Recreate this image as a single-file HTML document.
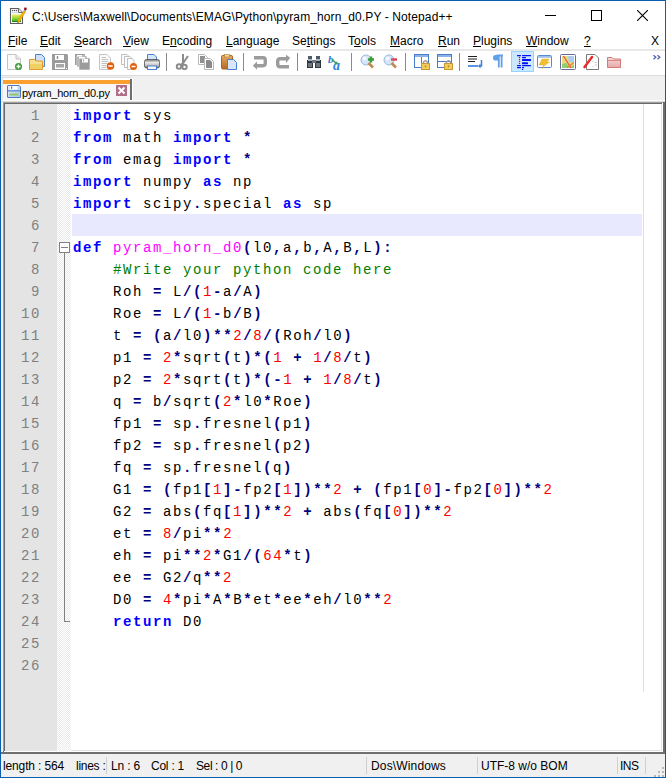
<!DOCTYPE html>
<html><head><meta charset="utf-8">
<style>
*{margin:0;padding:0;box-sizing:border-box}
html,body{width:666px;height:778px;overflow:hidden;background:#f0f0f0;font-family:"Liberation Sans",sans-serif;font-size:12px;color:#000}
.abs{position:absolute}
#win{position:absolute;left:0;top:0;width:666px;height:778px;border:1px solid #0a5fb0;background:#f0f0f0}
#title{position:absolute;left:1px;top:1px;width:664px;height:30px;background:#fff}
#menu{position:absolute;left:1px;top:31px;width:664px;height:18px;background:#fff}
.mi{position:absolute;top:3px;white-space:nowrap}
.u{text-decoration:underline}
#tb{position:absolute;left:1px;top:49px;width:664px;height:27px;background:#fff;border-top:2px solid #e8e8e8;border-bottom:1px solid #dcdcdc}
#tabbar{position:absolute;left:1px;top:76px;width:664px;height:26px;background:#f0f0f0}
#editor{position:absolute;left:3px;top:102px;width:662px;height:652px}
#status{position:absolute;left:1px;top:752px;width:664px;height:25px;background:#f0f0f0;border-top:2px solid #707070}
.code{position:absolute;left:73px;white-space:pre;font-family:"Liberation Mono",monospace;font-size:14px;letter-spacing:1.6px;line-height:22px}
.ln{position:absolute;width:40px;text-align:right;white-space:pre;font-family:"Liberation Mono",monospace;font-size:14px;letter-spacing:1.6px;line-height:22px;color:#808080}
.k{color:#0000ff;font-weight:bold}
.o{color:#000080;font-weight:bold}
.n{color:#ff0000}
.d{color:#ff00ff}
.c{color:#008000}
.st{position:absolute;top:5px;white-space:nowrap}
</style></head><body>
<div id="win"></div>
<div id="title">
 <svg class="abs" style="left:7px;top:5px" width="20" height="20" viewBox="0 0 20 20">
  <path d="M2.5 2.5 H10.5 L14.5 6.5 V17.5 H2.5 Z" fill="#fff" stroke="#5c5c5c" stroke-width="1.1"/>
  <path d="M10.5 2.5 V6.5 H14.5" fill="#e8e8e8" stroke="#5c5c5c" stroke-width="0.9"/>
  <circle cx="4.6" cy="4.5" r="0.8" fill="#555"/><circle cx="6.6" cy="4.5" r="0.8" fill="#555"/><circle cx="8.6" cy="4.5" r="0.8" fill="#555"/>
  <rect x="4" y="6.2" width="6" height="0.8" fill="#b8cde0"/>
  <defs><linearGradient id="gg" x1="0" y1="0" x2="0" y2="1"><stop offset="0" stop-color="#eef4d8"/><stop offset="0.2" stop-color="#dde650"/><stop offset="0.5" stop-color="#9ad838"/><stop offset="0.8" stop-color="#50c030"/><stop offset="1" stop-color="#0a7010"/></linearGradient></defs>
  <rect x="4" y="8" width="9" height="8" fill="url(#gg)"/>
  <path d="M9.3 15.2 L15.8 4.6 L17.6 5.8 L11.1 16.4 Z" fill="#f2b400" stroke="#d08a00" stroke-width="0.5"/>
  <path d="M9.3 15.2 L11.1 16.4 L9.3 17 Z" fill="#8a6030"/>
  <path d="M15.8 4.6 L16.6 3.3 L18.4 4.5 L17.6 5.8 Z" fill="#7aa0d0"/>
  <rect x="16.2" y="1.6" width="2.4" height="2.4" fill="#a00010"/>
 </svg>
 <div class="abs" style="left:31px;top:9px;font-size:12px;letter-spacing:0.11px;white-space:nowrap">C:\Users\Maxwell\Documents\EMAG\Python\pyram_horn_d0.PY - Notepad++</div>
 <div class="abs" style="left:544px;top:14px;width:11px;height:1px;background:#000"></div>
 <div class="abs" style="left:590px;top:9px;width:11px;height:11px;border:1px solid #000"></div>
 <svg class="abs" style="left:636px;top:9px" width="11" height="11" viewBox="0 0 11 11"><path d="M0 0 L11 11 M11 0 L0 11" stroke="#000" stroke-width="1.1"/></svg>
</div>
<div id="menu">
<span class="mi" style="left:7px"><span class="u">F</span>ile</span>
<span class="mi" style="left:39px"><span class="u">E</span>dit</span>
<span class="mi" style="left:73px"><span class="u">S</span>earch</span>
<span class="mi" style="left:122px"><span class="u">V</span>iew</span>
<span class="mi" style="left:161px">E<span class="u">n</span>coding</span>
<span class="mi" style="left:225px"><span class="u">L</span>anguage</span>
<span class="mi" style="left:291px">Se<span class="u">t</span>tings</span>
<span class="mi" style="left:347px">T<span class="u">o</span>ols</span>
<span class="mi" style="left:389px"><span class="u">M</span>acro</span>
<span class="mi" style="left:437px"><span class="u">R</span>un</span>
<span class="mi" style="left:472px"><span class="u">P</span>lugins</span>
<span class="mi" style="left:525px"><span class="u">W</span>indow</span>
<span class="mi" style="left:583px"><span class="u">?</span></span>
<span class="mi" style="left:650px">X</span>
</div>
<div id="tb"></div>
<svg class="abs" style="left:7px;top:54px" width="16" height="16" viewBox="0 0 16 16"><path d="M0.5 0.5 H9 L13.5 5 V15.5 H0.5 Z" fill="#fafafa" stroke="#c4c4c4"/><path d="M9 0.5 V5 H13.5" fill="#e8e8e8" stroke="#c4c4c4"/><circle cx="11.5" cy="12.5" r="3.5" fill="#3a9a30"/><path d="M9.5 12.5 H13.5 M11.5 10.5 V14.5" stroke="#fff" stroke-width="1.4"/></svg>
<svg class="abs" style="left:29px;top:54px" width="16" height="16" viewBox="0 0 16 16"><path d="M6.5 0.5 H12.5 L15.5 3.5 V12.5 H6.5 Z" fill="#cfe0f8" stroke="#4a80d0"/><path d="M0.5 5.5 H6 L7 7 H13.5 V15.5 H0.5 Z" fill="#f8e090" stroke="#e09a30"/><rect x="1" y="10" width="12" height="5" fill="#f0d060"/></svg>
<svg class="abs" style="left:52px;top:54px" width="16" height="16" viewBox="0 0 16 16"><path d="M0 0 H15 L16 1 V16 H0 Z" fill="#9c9c9c"/><rect x="3" y="1" width="9" height="5" fill="#fff"/><rect x="4.8" y="2" width="1.4" height="3" fill="#8a8a8a"/><rect x="3" y="9" width="10" height="6" fill="#fff"/><rect x="4" y="10" width="8" height="3.5" fill="#a8a8a8"/><rect x="14" y="14" width="1" height="1" fill="#fff"/></svg>
<svg class="abs" style="left:75px;top:54px" width="16" height="16" viewBox="0 0 16 16"><rect x="0" y="0" width="10" height="11" fill="#9c9c9c"/><rect x="2" y="2" width="10" height="11" fill="#9c9c9c" stroke="#fff" stroke-width="0.6"/><rect x="4" y="4" width="11" height="12" fill="#9c9c9c" stroke="#fff" stroke-width="0.6"/><rect x="2" y="1" width="5" height="1.5" fill="#fff"/><rect x="4" y="3" width="6" height="1.5" fill="#fff"/><rect x="7" y="5" width="6" height="3.5" fill="#fff"/><rect x="8" y="5.5" width="1" height="2" fill="#9c9c9c"/></svg>
<svg class="abs" style="left:99px;top:54px" width="16" height="16" viewBox="0 0 16 16"><path d="M0.5 0.5 H8 L11.5 4 V15.5 H0.5 Z" fill="#fafafa" stroke="#c4c4c4"/><path d="M2.5 3.5 H7 M2.5 5.5 H9 M2.5 7.5 H9 M2.5 9.5 H8 M2.5 11.5 H7 M2.5 13.5 H7" stroke="#b4b4b4" stroke-width="0.8"/><circle cx="11.5" cy="12" r="3.8" fill="#e0600c"/><path d="M9.3 12 H13.7" stroke="#fff" stroke-width="1.5"/></svg>
<svg class="abs" style="left:121px;top:54px" width="16" height="16" viewBox="0 0 16 16"><path d="M0.5 0.5 H6 L8 2.5 V10.5 H0.5 Z" fill="#fafafa" stroke="#c0c0c0"/><path d="M3.5 2.5 H9 L11 4.5 V13.5 H3.5 Z" fill="#fafafa" stroke="#c0c0c0"/><path d="M6.5 4.5 H11 L13 6.5 V15.5 H6.5 Z" fill="#fafafa" stroke="#c0c0c0"/><circle cx="12.5" cy="12.5" r="3.5" fill="#e06010"/><path d="M10.5 12.5 H14.5" stroke="#fff" stroke-width="1.4"/></svg>
<svg class="abs" style="left:144px;top:54px" width="17" height="16" viewBox="0 0 17 16"><defs><linearGradient id="prg" x1="0" y1="0" x2="0" y2="1"><stop offset="0" stop-color="#707070"/><stop offset="0.35" stop-color="#e8e8e8"/><stop offset="0.7" stop-color="#c0c0c0"/><stop offset="1" stop-color="#5a5a5a"/></linearGradient></defs><path d="M3.5 0.5 H10 L12.5 3 V7 H3.5 Z" fill="#d4e4fa" stroke="#4a80d0"/><rect x="0.5" y="5.5" width="15" height="8.5" rx="2" fill="url(#prg)" stroke="#505050" stroke-width="0.8"/><rect x="3.5" y="12" width="9" height="3.5" fill="#f4f8ff" stroke="#4a80d0"/></svg>
<div class="abs" style="left:166px;top:53px;width:1px;height:18px;background:#8a8a8a"></div>
<svg class="abs" style="left:175px;top:54px" width="16" height="16" viewBox="0 0 16 16"><path d="M8 0 V9 M13 2 L7.5 10" stroke="#8c8c8c" stroke-width="2"/><circle cx="4" cy="12.5" r="2.2" fill="none" stroke="#8c8c8c" stroke-width="2"/><circle cx="9.5" cy="13" r="2.2" fill="none" stroke="#8c8c8c" stroke-width="2"/><path d="M6 11 L8 9" stroke="#8c8c8c" stroke-width="2"/></svg>
<svg class="abs" style="left:198px;top:54px" width="16" height="16" viewBox="0 0 16 16"><path d="M0.5 0.5 H6.5 L9.5 3.5 V10.5 H0.5 Z" fill="#fff" stroke="#b8b8b8"/><rect x="2" y="2" width="5" height="7" fill="#909090"/><path d="M6.5 4.5 H12.5 L15.5 7.5 V15.5 H6.5 Z" fill="#fff" stroke="#b8b8b8"/><path d="M8 6 H12 L14 8 V14 H8 Z" fill="#8a8a8a"/></svg>
<svg class="abs" style="left:221px;top:54px" width="16" height="16" viewBox="0 0 16 16"><defs><linearGradient id="pg" x1="0" y1="0" x2="0" y2="1"><stop offset="0" stop-color="#e8a860"/><stop offset="1" stop-color="#b06a28"/></linearGradient></defs><rect x="0.5" y="1.5" width="11" height="13.5" rx="1.2" fill="url(#pg)" stroke="#a86428"/><rect x="3.5" y="0.5" width="5" height="2.5" fill="#f0d890" stroke="#b08040" stroke-width="0.6"/><path d="M6.5 5.5 H12.5 L15.5 8.5 V15.5 H6.5 Z" fill="#d8e6fc" stroke="#4a80d0"/></svg>
<div class="abs" style="left:243px;top:53px;width:1px;height:18px;background:#8a8a8a"></div>
<svg class="abs" style="left:252px;top:54px" width="16" height="16" viewBox="0 0 16 16"><path d="M2 3.8 H11 Q13.3 3.8 13.3 6.5 V9 Q13.3 11.7 11 11.7 H4" fill="none" stroke="#9c9c9c" stroke-width="3.4"/><path d="M0.8 11.7 L5 7.6 V15.7 Z" fill="#9c9c9c"/></svg>
<svg class="abs" style="left:275px;top:54px" width="16" height="16" viewBox="0 0 16 16"><path d="M14 12.8 H5 Q2.7 12.8 2.7 10 V7.5 Q2.7 4.8 5 4.8 H12" fill="none" stroke="#9c9c9c" stroke-width="3.4"/><path d="M15.2 3.8 L11 0.8 V9.2 Z" fill="#9c9c9c"/></svg>
<div class="abs" style="left:297px;top:53px;width:1px;height:18px;background:#8a8a8a"></div>
<svg class="abs" style="left:306px;top:54px" width="16" height="16" viewBox="0 0 16 16"><rect x="1" y="6" width="6" height="8" fill="#2c343c"/><rect x="9" y="6" width="6" height="8" fill="#2c343c"/><rect x="2" y="2" width="4" height="4" fill="#505a66"/><rect x="10" y="2" width="4" height="4" fill="#505a66"/><rect x="6" y="6" width="4" height="3" fill="#6a7888"/><rect x="2" y="5" width="4" height="2" fill="#a8b4c0"/><rect x="10" y="5" width="4" height="2" fill="#a8b4c0"/><rect x="2.5" y="9" width="1" height="4" fill="#b0b8c0"/><rect x="4.5" y="9" width="1" height="4" fill="#b0b8c0"/><rect x="10.5" y="9" width="1" height="4" fill="#b0b8c0"/><rect x="12.5" y="9" width="1" height="4" fill="#b0b8c0"/></svg>
<svg class="abs" style="left:327px;top:54px" width="18" height="16" viewBox="0 0 18 16"><text x="1" y="9" font-family="Liberation Serif" font-style="italic" font-weight="bold" font-size="11" fill="#2f78e0">b</text><text x="6" y="15.5" font-family="Liberation Serif" font-style="italic" font-weight="bold" font-size="14" fill="#2f80e8">a</text><path d="M5 5.5 L9.5 9.5" stroke="#40a050" stroke-width="1.6"/><path d="M10.5 10.5 L7 10.3 L10.3 7 Z" fill="#40a050"/></svg>
<div class="abs" style="left:351px;top:53px;width:1px;height:18px;background:#8a8a8a"></div>
<svg class="abs" style="left:360px;top:54px" width="16" height="16" viewBox="0 0 16 16"><circle cx="6" cy="6" r="5" fill="#d4e6fa" stroke="#9ab8dc"/><circle cx="4.5" cy="4.5" r="2" fill="#f4f8ff"/><path d="M8.5 9 L13 13.5" stroke="#c08a50" stroke-width="2.6"/><path d="M8 5.5 H14 M11 2.5 V8.5" stroke="#3a9a3a" stroke-width="2.4"/></svg>
<svg class="abs" style="left:383px;top:54px" width="16" height="16" viewBox="0 0 16 16"><circle cx="6" cy="6" r="5" fill="#d4e6fa" stroke="#9ab8dc"/><circle cx="4.5" cy="4.5" r="2" fill="#f4f8ff"/><path d="M8.5 9 L13 13.5" stroke="#c08a50" stroke-width="2.6"/><path d="M8 5.5 H14" stroke="#e04050" stroke-width="2.4"/></svg>
<div class="abs" style="left:405px;top:53px;width:1px;height:18px;background:#8a8a8a"></div>
<svg class="abs" style="left:414px;top:54px" width="16" height="16" viewBox="0 0 16 16"><rect x="0.5" y="0.5" width="14" height="13" fill="#fff" stroke="#4a7ccc"/><rect x="1" y="1" width="13" height="2" fill="#8ab4e8"/><path d="M7.5 3 V13" stroke="#4a7ccc"/><rect x="7.5" y="9.5" width="8" height="6" fill="#f2cc58" stroke="#c89a30"/><path d="M9.5 9.5 V8 Q11.5 5.5 13.5 8 V9.5" fill="none" stroke="#9a9a9a" stroke-width="1.4"/><rect x="10.8" y="11.5" width="1.4" height="1.6" fill="#b08020"/></svg>
<svg class="abs" style="left:437px;top:54px" width="16" height="16" viewBox="0 0 16 16"><rect x="0.5" y="0.5" width="14" height="13" fill="#fff" stroke="#4a7ccc"/><rect x="1" y="1" width="13" height="2" fill="#8ab4e8"/><path d="M1 7.5 H14" stroke="#4a7ccc"/><rect x="7.5" y="9.5" width="8" height="6" fill="#f2cc58" stroke="#c89a30"/><path d="M9.5 9.5 V8 Q11.5 5.5 13.5 8 V9.5" fill="none" stroke="#9a9a9a" stroke-width="1.4"/><rect x="10.8" y="11.5" width="1.4" height="1.6" fill="#b08020"/></svg>
<div class="abs" style="left:459px;top:53px;width:1px;height:18px;background:#8a8a8a"></div>
<svg class="abs" style="left:467px;top:54px" width="16" height="16" viewBox="0 0 16 16"><path d="M1 2.5 H10 M1 5 H10 M1 7.5 H8" stroke="#202020" stroke-width="1"/><path d="M1 12 H11" stroke="#5a98e0" stroke-width="2"/><path d="M14.5 6 V12 H12" fill="none" stroke="#3a80d8" stroke-width="1.5"/><path d="M11 12 L13.5 9.5 V14.5 Z" fill="#3a80d8"/></svg>
<svg class="abs" style="left:492px;top:54px" width="16" height="16" viewBox="0 0 16 16"><path d="M4.5 1.5 H11 M6.8 2 V13.5 M9.6 2 V13.5" stroke="#62a0e8" stroke-width="1.8"/><path d="M6.8 1 H3.5 Q1 1 1 3.8 Q1 6.6 3.5 6.6 H6.8 Z" fill="#62a0e8"/></svg>
<div class="abs" style="left:511px;top:51px;width:23px;height:21px;background:#cce8ff;border:1px solid #99d1ff"></div>
<svg class="abs" style="left:516px;top:54px" width="16" height="16" viewBox="0 0 16 16"><rect x="1" y="1" width="4" height="1.2" rx="0.5" fill="#0010f0"/><rect x="6" y="1" width="9" height="1.2" rx="0.5" fill="#0010f0"/><rect x="6" y="3" width="4" height="1.2" rx="0.5" fill="#0010f0"/><rect x="6" y="5" width="9" height="2" rx="0.5" fill="#0010f0"/><rect x="6" y="8.3" width="6" height="2" rx="0.5" fill="#0010f0"/><rect x="1" y="11" width="4" height="1.2" rx="0.5" fill="#0010f0"/><rect x="6" y="11" width="9" height="1.2" rx="0.5" fill="#0010f0"/><rect x="1" y="13" width="4" height="1.2" rx="0.5" fill="#0010f0"/><rect x="6" y="13" width="2" height="1.2" rx="0.5" fill="#0010f0"/><circle cx="6.5" cy="15.4" r="0.7" fill="#0010f0"/><circle cx="3.5" cy="3.5" r="0.75" fill="#f01010"/><circle cx="3.5" cy="5.5" r="0.75" fill="#f01010"/><circle cx="3.5" cy="7.5" r="0.75" fill="#f01010"/><circle cx="3.5" cy="9.5" r="0.75" fill="#f01010"/></svg>
<svg class="abs" style="left:537px;top:54px" width="16" height="16" viewBox="0 0 16 16"><rect x="0.5" y="1.5" width="14" height="12" rx="1" fill="#fff" stroke="#5a8ad4"/><rect x="1" y="2" width="13" height="1.8" fill="#9ec0ec"/><path d="M5 5 H12 L10 8 L12.5 8 L7 12 L5.5 15 L6.5 11 L2 11 Z" fill="#f0c030" stroke="#e0a820" stroke-width="0.4"/></svg>
<svg class="abs" style="left:560px;top:54px" width="16" height="16" viewBox="0 0 16 16"><rect x="0.5" y="0.5" width="15" height="15" rx="1" fill="#fff" stroke="#6a6a98"/><rect x="2" y="2" width="12" height="12" fill="#e4dc80"/><path d="M8 2 H14 V9 L9 8 Z" fill="#a8cdf0"/><path d="M2 10 L6 9 L10 14 H2 Z" fill="#8cd070"/><path d="M10 14 L14 10 V14 Z" fill="#90d070"/><path d="M3.5 2 L11 14" stroke="#f05040" stroke-width="1.3"/><path d="M7 13.5 L14 8.5" stroke="#f08030" stroke-width="1.2"/></svg>
<svg class="abs" style="left:583px;top:54px" width="16" height="16" viewBox="0 0 16 16"><path d="M3.5 0.5 H12 L15.5 4 V15.5 H3.5 Z" fill="#fff" stroke="#7a7a7a"/><path d="M13 8 V13" stroke="#909090" stroke-dasharray="1 1.5"/><circle cx="10" cy="7.5" r="0.5" fill="#90c090"/><circle cx="10" cy="12.5" r="0.5" fill="#90c090"/><path d="M1.5 13 L9 3" stroke="#f02020" stroke-width="2.4" stroke-linecap="round"/><path d="M2 11.5 L8 4" stroke="#ff9090" stroke-width="0.6" stroke-dasharray="1 1"/></svg>
<svg class="abs" style="left:606px;top:54px" width="16" height="16" viewBox="0 0 16 16"><defs><linearGradient id="fg" x1="0" y1="0" x2="0" y2="1"><stop offset="0" stop-color="#f8dada"/><stop offset="1" stop-color="#e8a8a8"/></linearGradient></defs><path d="M1.5 3.5 H6 L7.5 5 H14.5 V13.5 H1.5 Z" fill="url(#fg)" stroke="#d07a7a"/><path d="M2 6.5 H14" stroke="#d88888"/></svg>
<svg class="abs" style="left:652px;top:54px" width="10" height="7" viewBox="0 0 10 7"><path d="M1.5 1.2 L3.8 3.2 L1.5 5.2 M5.5 1.2 L7.8 3.2 L5.5 5.2" fill="none" stroke="#5060b0" stroke-width="1.3"/></svg>

<div id="tabbar"></div>
<div class="abs" style="left:2px;top:77px;width:129px;height:1px;background:#dcdcdc"></div>
<div class="abs" style="left:2px;top:78px;width:1px;height:24px;background:#e3e3e3"></div>
<div class="abs" style="left:3px;top:78px;width:128px;height:23px;background:#f6f6f6;border-top:2px solid #fff"></div>
<div class="abs" style="left:3px;top:80px;width:127px;height:4px;background:#f9a030"></div>
<div class="abs" style="left:130px;top:79px;width:2px;height:21px;background:#6e6e6e"></div>
<div class="abs" style="left:132px;top:79px;width:1px;height:21px;background:#fff"></div>
<svg class="abs" style="left:7px;top:85px" width="14" height="13" viewBox="0 0 14 13">
 <defs><linearGradient id="sg" x1="0" y1="0" x2="1" y2="1"><stop offset="0" stop-color="#e4eefc"/><stop offset="1" stop-color="#a8c4ec"/></linearGradient></defs>
 <path d="M1 0.5 H12 L13.5 2 V12 Q13.5 12.5 13 12.5 H1 Q0.5 12.5 0.5 12 V1 Q0.5 0.5 1 0.5 Z" fill="url(#sg)" stroke="#4a78c4"/>
 <rect x="3" y="1" width="7.5" height="3.5" fill="#fff"/><rect x="4" y="1.5" width="1.2" height="2.2" fill="#3a68b4"/>
 <rect x="1" y="5.2" width="12" height="1.3" fill="#5a88d0"/>
 <rect x="2.5" y="8.5" width="9" height="2" fill="#94c864"/>
</svg>
<div class="abs" style="left:22px;top:87px;font-size:11px;letter-spacing:-0.25px;white-space:nowrap">pyram_horn_d0.py</div>
<svg class="abs" style="left:116px;top:85px" width="11" height="11" viewBox="0 0 11 11">
 <rect x="0" y="0" width="11" height="11" fill="#b0708a"/>
 <path d="M2.5 2.5 L8.5 8.5 M8.5 2.5 L2.5 8.5" stroke="#fff" stroke-width="2"/>
</svg>
<div class="abs" style="left:1px;top:100px;width:664px;height:1px;background:#fff"></div>
<div class="abs" style="left:1px;top:101px;width:664px;height:1px;background:#dcdcdc"></div>
<div id="editor">
 <div class="abs" style="left:0;top:0;width:662px;height:650px;background:#6e6e6e"></div>
 <div class="abs" style="left:0;top:0;width:660px;height:1px;background:#a0a0a0"></div>
 <div class="abs" style="left:0;top:0;width:1px;height:649px;background:#a0a0a0"></div>
 <div class="abs" style="left:1px;top:1px;width:659px;height:649px;background:#fff"></div>
 <div class="abs" style="left:1px;top:1px;width:658px;height:1px;background:#696969"></div>
 <div class="abs" style="left:1px;top:1px;width:1px;height:648px;background:#696969"></div>
 <div class="abs" style="left:2px;top:2px;width:657px;height:647px;background:#e3e3e3"></div>
 <div class="abs" style="left:2px;top:2px;width:656px;height:646px;background:#fff"></div>
 <div id="lnm" class="abs" style="left:2px;top:2px;width:52px;height:647px;background:#e4e4e4"></div>
 <div id="fold" class="abs" style="left:54px;top:2px;width:14px;height:647px;background:repeating-conic-gradient(#ffffff 0% 25%, #ebebeb 0% 50%) 0 0/2px 2px"></div>
 <div class="abs" style="left:69px;top:112px;width:570px;height:22px;background:#e8e8ff"></div>
 <div class="abs" style="left:640px;top:2px;width:1px;height:588px;background:#dedede"></div>
 <div class="abs" style="left:56px;top:140px;width:11px;height:11px;border:1px solid #808080;background:#fff"></div>
 <div class="abs" style="left:58px;top:145px;width:7px;height:1px;background:#808080"></div>
 <div class="abs" style="left:61px;top:151px;width:1px;height:369px;background:#808080"></div>
 <div class="abs" style="left:61px;top:519px;width:6px;height:1px;background:#808080"></div>
 <div class="ln" style="left:-2px;top:3px">1
2
3
4
5
6
7
8
9
10
11
12
13
14
15
16
17
18
19
20
21
22
23
24
25
26</div>
 <div class="code" style="left:70px;top:3px"><span class="k">import</span> sys
<span class="k">from</span> math <span class="k">import</span> <span class="o">*</span>
<span class="k">from</span> emag <span class="k">import</span> <span class="o">*</span>
<span class="k">import</span> numpy <span class="k">as</span> np
<span class="k">import</span> scipy<span class="o">.</span>special <span class="k">as</span> sp

<span class="k">def</span> <span class="d">pyram_horn_d0</span><span class="o">(</span>l0<span class="o">,</span>a<span class="o">,</span>b<span class="o">,</span>A<span class="o">,</span>B<span class="o">,</span>L<span class="o">)</span><span class="o">:</span>
    <span class="c">#Write your python code here</span>
    Roh <span class="o">=</span> L<span class="o">/</span><span class="o">(</span><span class="n">1</span><span class="o">-</span>a<span class="o">/</span>A<span class="o">)</span>
    Roe <span class="o">=</span> L<span class="o">/</span><span class="o">(</span><span class="n">1</span><span class="o">-</span>b<span class="o">/</span>B<span class="o">)</span>
    t <span class="o">=</span> <span class="o">(</span>a<span class="o">/</span>l0<span class="o">)</span><span class="o">*</span><span class="o">*</span><span class="n">2</span><span class="o">/</span><span class="n">8</span><span class="o">/</span><span class="o">(</span>Roh<span class="o">/</span>l0<span class="o">)</span>
    p1 <span class="o">=</span> <span class="n">2</span><span class="o">*</span>sqrt<span class="o">(</span>t<span class="o">)</span><span class="o">*</span><span class="o">(</span><span class="n">1</span> <span class="o">+</span> <span class="n">1</span><span class="o">/</span><span class="n">8</span><span class="o">/</span>t<span class="o">)</span>
    p2 <span class="o">=</span> <span class="n">2</span><span class="o">*</span>sqrt<span class="o">(</span>t<span class="o">)</span><span class="o">*</span><span class="o">(</span><span class="o">-</span><span class="n">1</span> <span class="o">+</span> <span class="n">1</span><span class="o">/</span><span class="n">8</span><span class="o">/</span>t<span class="o">)</span>
    q <span class="o">=</span> b<span class="o">/</span>sqrt<span class="o">(</span><span class="n">2</span><span class="o">*</span>l0<span class="o">*</span>Roe<span class="o">)</span>
    fp1 <span class="o">=</span> sp<span class="o">.</span>fresnel<span class="o">(</span>p1<span class="o">)</span>
    fp2 <span class="o">=</span> sp<span class="o">.</span>fresnel<span class="o">(</span>p2<span class="o">)</span>
    fq <span class="o">=</span> sp<span class="o">.</span>fresnel<span class="o">(</span>q<span class="o">)</span>
    G1 <span class="o">=</span> <span class="o">(</span>fp1<span class="o">[</span><span class="n">1</span><span class="o">]</span><span class="o">-</span>fp2<span class="o">[</span><span class="n">1</span><span class="o">]</span><span class="o">)</span><span class="o">*</span><span class="o">*</span><span class="n">2</span> <span class="o">+</span> <span class="o">(</span>fp1<span class="o">[</span><span class="n">0</span><span class="o">]</span><span class="o">-</span>fp2<span class="o">[</span><span class="n">0</span><span class="o">]</span><span class="o">)</span><span class="o">*</span><span class="o">*</span><span class="n">2</span>
    G2 <span class="o">=</span> abs<span class="o">(</span>fq<span class="o">[</span><span class="n">1</span><span class="o">]</span><span class="o">)</span><span class="o">*</span><span class="o">*</span><span class="n">2</span> <span class="o">+</span> abs<span class="o">(</span>fq<span class="o">[</span><span class="n">0</span><span class="o">]</span><span class="o">)</span><span class="o">*</span><span class="o">*</span><span class="n">2</span>
    et <span class="o">=</span> <span class="n">8</span><span class="o">/</span>pi<span class="o">*</span><span class="o">*</span><span class="n">2</span>
    eh <span class="o">=</span> pi<span class="o">*</span><span class="o">*</span><span class="n">2</span><span class="o">*</span>G1<span class="o">/</span><span class="o">(</span><span class="n">64</span><span class="o">*</span>t<span class="o">)</span>
    ee <span class="o">=</span> G2<span class="o">/</span>q<span class="o">*</span><span class="o">*</span><span class="n">2</span>
    D0 <span class="o">=</span> <span class="n">4</span><span class="o">*</span>pi<span class="o">*</span>A<span class="o">*</span>B<span class="o">*</span>et<span class="o">*</span>ee<span class="o">*</span>eh<span class="o">/</span>l0<span class="o">*</span><span class="o">*</span><span class="n">2</span>
    <span class="k">return</span> D0

</div>
</div>
<div id="status">
 <div class="st" style="left:2px;letter-spacing:-0.14px">length : 564</div>
 <div class="st" style="left:75px;letter-spacing:-0.27px">lines :</div>
 <div class="abs" style="left:105px;top:3px;width:1px;height:17px;background:#cfcfcf"></div>
 <div class="st" style="left:110px;letter-spacing:-0.15px">Ln : 6</div>
 <div class="st" style="left:150px;letter-spacing:-0.24px">Col : 1</div>
 <div class="st" style="left:195px;letter-spacing:-0.4px">Sel : 0 | 0</div>
 <div class="abs" style="left:365px;top:3px;width:1px;height:17px;background:#cfcfcf"></div>
 <div class="st" style="left:370px;letter-spacing:0.15px">Dos\Windows</div>
 <div class="abs" style="left:476px;top:3px;width:1px;height:17px;background:#cfcfcf"></div>
 <div class="st" style="left:480px">UTF-8 w/o BOM</div>
 <div class="abs" style="left:616px;top:3px;width:1px;height:17px;background:#cfcfcf"></div>
 <div class="st" style="left:619px;letter-spacing:-0.5px">INS</div>
 <div class="abs" style="left:644px;top:3px;width:1px;height:17px;background:#cfcfcf"></div>
 <svg class="abs" style="left:653px;top:13px" width="11" height="11" viewBox="0 0 11 11"><g fill="#b8b8b8"><rect x="8" y="0" width="2" height="2"/><rect x="4" y="4" width="2" height="2"/><rect x="8" y="4" width="2" height="2"/><rect x="0" y="8" width="2" height="2"/><rect x="4" y="8" width="2" height="2"/><rect x="8" y="8" width="2" height="2"/></g></svg>
</div>
</body></html>
